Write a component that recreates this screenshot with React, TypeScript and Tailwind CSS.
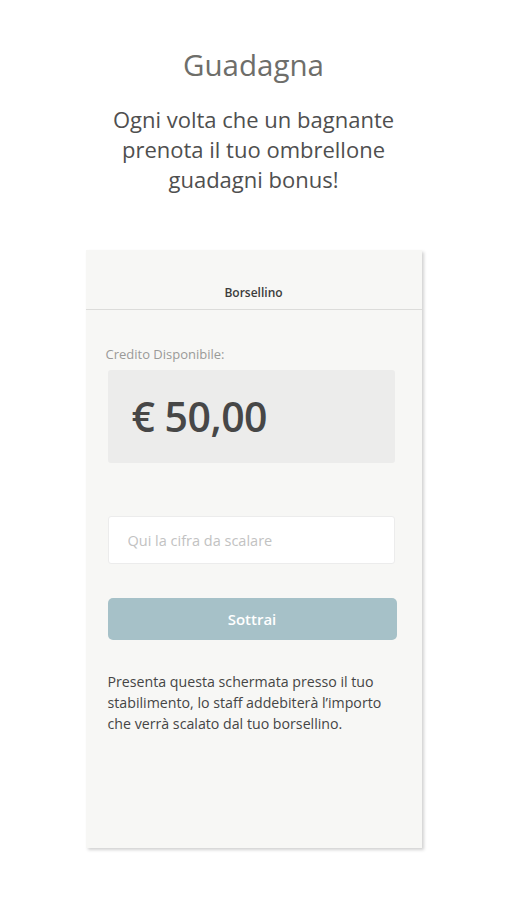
import React, { useState } from 'react';

const App: React.FC = () => {
  const [amount, setAmount] = useState('');

  return (
    <div className="min-h-[900px] w-full bg-white flex flex-col items-center" style={{ fontFamily: '"Open Sans", Lato, sans-serif' }}>
      <h1 className="mt-[46px] text-[29.5px] leading-[38px] text-[#6e6e6a]">Guadagna</h1>
      <p className="mt-[20px] text-center text-[22px] leading-[30px] text-[#4f4f4f]">
        Ogni volta che un bagnante<br />prenota il tuo ombrellone<br />guadagni bonus!
      </p>

      {/* Wallet card */}
      <div className="mt-[56px] w-[336px] h-[598px] bg-[#f7f7f5] flex flex-col shadow-[2px_2px_3px_rgba(0,0,0,0.18)]">
        <div className="h-[60px] flex items-end justify-center pb-[7px] border-b border-[#dcdcda]">
          <span className="text-[12px] font-semibold text-[#3c3c3c]">Borsellino</span>
        </div>

        <div className="px-[22px] flex flex-col">
          <span className="mt-[35px] text-[13px] leading-[18px] text-[#9a9a98] -ml-[2px]">Credito Disponibile:</span>
          <div className="mt-[7px] w-[287px] h-[93px] bg-[#ececeb] rounded-[3px] flex items-center pl-[24px]">
            <span className="text-[41px] font-semibold text-[#474747] tracking-[-0.5px]">€ 50,00</span>
          </div>

          <input
            value={amount}
            onChange={(e) => setAmount(e.target.value)}
            placeholder="Qui la cifra da scalare"
            className="mt-[53px] w-[287px] h-[48px] bg-white rounded-[3px] border border-[#ececec] pl-[19px] text-[14.5px] text-[#444] placeholder:text-[#c2c2c2] outline-none"
          />

          <button className="mt-[34px] w-[289px] h-[42px] rounded-[5px] bg-[#a6c1c8] text-white text-[15px] font-semibold">
            Sottrai
          </button>

          <p className="mt-[31px] text-[14.2px] leading-[21px] text-[#454545] whitespace-nowrap">
            Presenta questa schermata presso il tuo<br />stabilimento, lo staff addebiterà l’importo<br />che verrà scalato dal tuo borsellino.
          </p>
        </div>
      </div>
    </div>
  );
};

export default App;
